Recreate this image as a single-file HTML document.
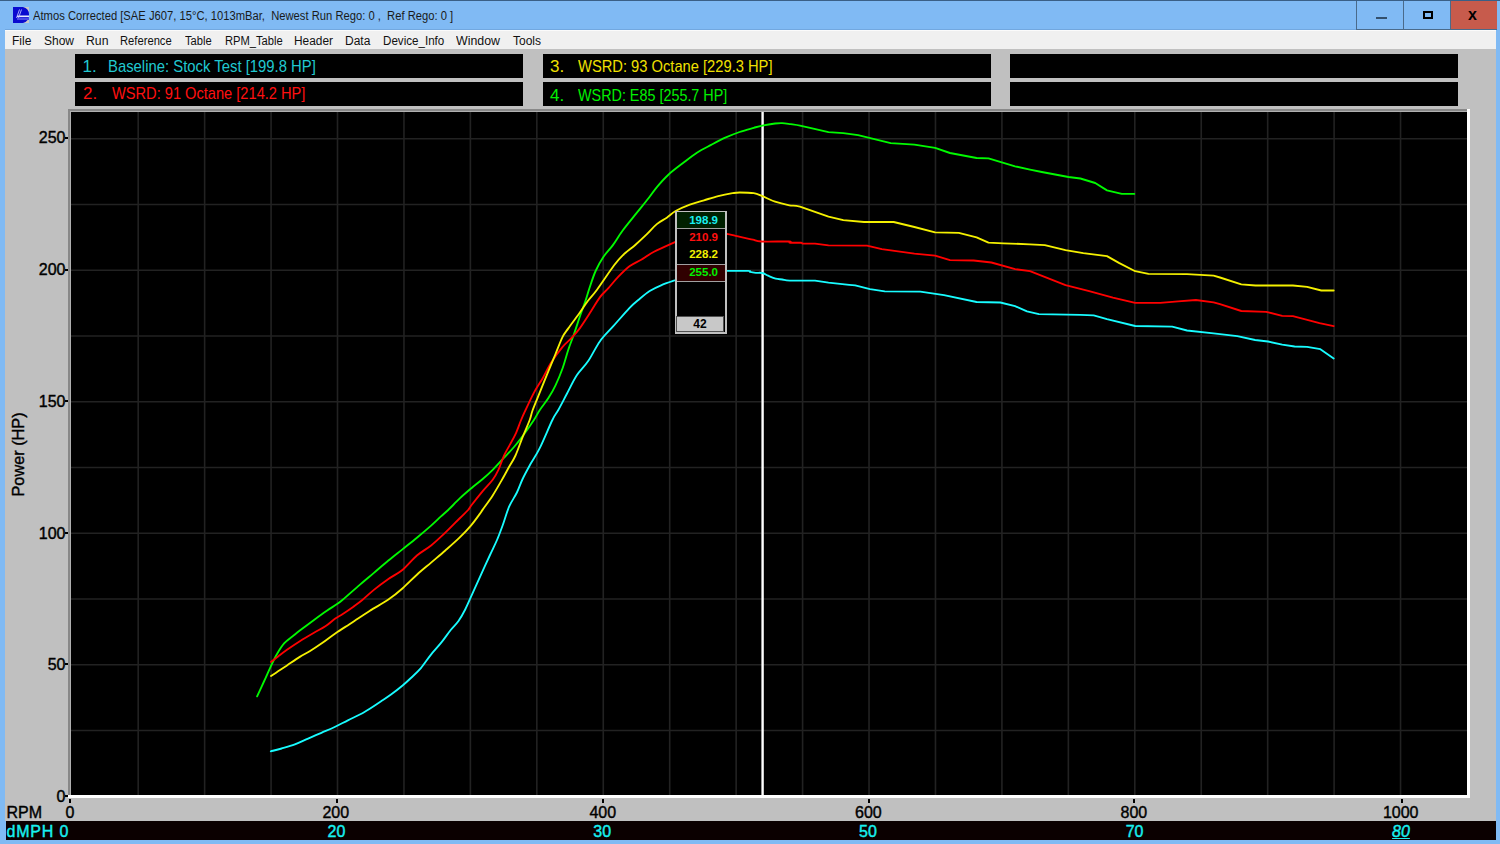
<!DOCTYPE html>
<html><head><meta charset="utf-8">
<style>
html,body{margin:0;padding:0;}
body{width:1500px;height:844px;position:relative;overflow:hidden;background:#80baf4;font-family:"Liberation Sans",sans-serif;}
.abs{position:absolute;}
#topline{left:0;top:0;width:1500px;height:1px;background:#3a5f86;}
#icon{left:13px;top:7px;width:16px;height:16px;}
#title{left:33px;top:7px;font-size:12.5px;color:#1a1a1a;white-space:nowrap;line-height:18px;transform:scaleX(0.897);transform-origin:0 0;}
.wbtn{top:1px;height:29px;}
#bmin{left:1356px;width:47px;border-left:1px solid #4a6a8a;border-bottom:1px solid #4a6a8a;box-sizing:border-box;}
#bmax{left:1403px;width:47px;border-left:1px solid #4a6a8a;border-bottom:1px solid #4a6a8a;box-sizing:border-box;}
#bclose{left:1450px;width:47px;background:#c75b4c;border-left:1px solid #4a6a8a;border-bottom:1px solid #4a6a8a;box-sizing:border-box;}
#menubar{left:5px;top:30px;width:1491px;height:19px;background:#f0f0f0;border-top:1px solid #fbfbfb;}
.mi{position:absolute;top:3px;font-size:12px;color:#111;line-height:14px;transform-origin:0 0;white-space:nowrap;}
#client{left:5px;top:49px;width:1491px;height:772px;background:#c0c0c0;}
.lbox{position:absolute;background:#000;height:24px;width:448px;}
.lt{position:absolute;top:1px;font-size:17px;line-height:20px;white-space:nowrap;transform-origin:0 0;}
#chartframe{left:68px;top:109px;width:1402px;height:689px;background:#fff;}
#chartframe .tl{position:absolute;left:0;top:0;width:1399px;height:686px;background:#888;}
#chartframe .tl2{position:absolute;left:2px;top:2px;width:1397px;height:684px;background:#b0b0b0;}
#plot{left:71px;top:112px;width:1396px;height:683px;background:#000;}
.xl{position:absolute;top:803.5px;width:200px;text-align:center;font-size:16px;line-height:18px;color:#000;-webkit-text-stroke:0.4px #000;}
.xt{position:absolute;top:799px;width:2px;height:4px;background:#000;}
.yl{position:absolute;left:0;width:65.5px;text-align:right;font-size:16px;line-height:18px;color:#000;-webkit-text-stroke:0.4px #000;}
.yt{position:absolute;left:65px;width:3px;height:2px;background:#000;}
#bottombar{left:6px;top:821px;width:1490px;height:19px;background:#0b0000;}
.ml{position:absolute;top:822.5px;width:200px;text-align:center;font-size:16px;line-height:18px;color:#18f0f0;-webkit-text-stroke:0.4px #18f0f0;}
.it{font-style:italic;text-decoration:underline;}
</style></head>
<body>
<div class="abs" id="topline"></div>
<svg class="abs" id="icon" viewBox="0 0 16 16"><rect width="16" height="16" fill="#c8c8c8"/><path d="M0 0H10A8 8 0 0 1 16 8V8A8 8 0 0 1 10 16H0Z" fill="#0a0ad0"/><path d="M4 10.5H16V13H4Z" fill="#4a4ae6"/><path d="M4 8.5H16V10H4Z" fill="#e8e8ff"/><path d="M3.5 11L6.5 2.5M5.5 11L8.5 2.5" stroke="#b8b8ff" stroke-width="0.9"/></svg>
<div class="abs" id="title">Atmos Corrected [SAE J607, 15°C, 1013mBar,&nbsp; Newest Run Rego: 0 ,&nbsp; Ref Rego: 0 ]</div>
<div class="abs wbtn" id="bmin"><div class="abs" style="left:19px;top:16px;width:11px;height:2px;background:#34506c"></div></div>
<div class="abs wbtn" id="bmax"><div class="abs" style="left:19px;top:10px;width:10px;height:8px;border:2px solid #000;box-sizing:border-box"></div></div>
<div class="abs wbtn" id="bclose"><div class="abs" style="left:17px;top:5px;font-size:16px;font-weight:bold;color:#000;line-height:18px">x</div></div>
<div class="abs" style="left:5px;top:29px;width:1351px;height:1px;background:#72a8e0"></div>
<div class="abs" id="menubar">
<span class="mi" style="left:7px;transform:scaleX(1)">File</span>
<span class="mi" style="left:39px;transform:scaleX(1)">Show</span>
<span class="mi" style="left:81px;transform:scaleX(1.02)">Run</span>
<span class="mi" style="left:115px;transform:scaleX(0.934)">Reference</span>
<span class="mi" style="left:180px;transform:scaleX(0.93)">Table</span>
<span class="mi" style="left:220px;transform:scaleX(0.93)">RPM_Table</span>
<span class="mi" style="left:289px;transform:scaleX(0.99)">Header</span>
<span class="mi" style="left:340px;transform:scaleX(1)">Data</span>
<span class="mi" style="left:378px;transform:scaleX(0.967)">Device_Info</span>
<span class="mi" style="left:451px;transform:scaleX(1.03)">Window</span>
<span class="mi" style="left:508px;transform:scaleX(1.0)">Tools</span>
</div>
<div class="abs" id="client"></div>
<div class="lbox" style="left:75px;top:54px"><span class="lt" style="left:7.5px;top:2.5px;color:#20c8d0">1.</span><span class="lt" style="left:33px;top:2.5px;color:#20c8d0;transform:scaleX(0.874)">Baseline: Stock Test [199.8 HP]</span></div>
<div class="lbox" style="left:75px;top:82px"><span class="lt" style="left:8px;top:1.5px;color:#ff1010">2.</span><span class="lt" style="left:37px;top:1.5px;color:#ff1010;transform:scaleX(0.860)">WSRD: 91 Octane [214.2 HP]</span></div>
<div class="lbox" style="left:543px;top:54px"><span class="lt" style="left:7px;top:2.5px;color:#f0e000">3.</span><span class="lt" style="left:35px;top:2.5px;color:#f0e000;transform:scaleX(0.865)">WSRD: 93 Octane [229.3 HP]</span></div>
<div class="lbox" style="left:543px;top:82px"><span class="lt" style="left:7px;top:3.5px;color:#00f000">4.</span><span class="lt" style="left:35px;top:3.5px;color:#00f000;transform:scaleX(0.845)">WSRD: E85 [255.7 HP]</span></div>
<div class="lbox" style="left:1009.5px;top:54px;width:448.5px"></div>
<div class="lbox" style="left:1009.5px;top:82px;width:448.5px"></div>
<div class="abs" id="chartframe"><div class="tl"></div><div class="tl2"></div><div class="tl3"></div></div>
<div class="abs" id="plot"></div>
<svg class="abs" style="left:0;top:0" width="1500" height="844">
<g stroke="#222" stroke-width="1.6">
<line x1="138.19" y1="112" x2="138.19" y2="795" />
<line x1="204.63" y1="112" x2="204.63" y2="795" />
<line x1="271.07" y1="112" x2="271.07" y2="795" />
<line x1="337.51" y1="112" x2="337.51" y2="795" />
<line x1="403.95" y1="112" x2="403.95" y2="795" />
<line x1="470.39" y1="112" x2="470.39" y2="795" />
<line x1="536.83" y1="112" x2="536.83" y2="795" />
<line x1="603.27" y1="112" x2="603.27" y2="795" />
<line x1="669.71" y1="112" x2="669.71" y2="795" />
<line x1="736.15" y1="112" x2="736.15" y2="795" />
<line x1="802.59" y1="112" x2="802.59" y2="795" />
<line x1="869.03" y1="112" x2="869.03" y2="795" />
<line x1="935.47" y1="112" x2="935.47" y2="795" />
<line x1="1001.91" y1="112" x2="1001.91" y2="795" />
<line x1="1068.35" y1="112" x2="1068.35" y2="795" />
<line x1="1134.79" y1="112" x2="1134.79" y2="795" />
<line x1="1201.23" y1="112" x2="1201.23" y2="795" />
<line x1="1267.67" y1="112" x2="1267.67" y2="795" />
<line x1="1334.11" y1="112" x2="1334.11" y2="795" />
<line x1="1400.55" y1="112" x2="1400.55" y2="795" />
<line x1="71" y1="730.45" x2="1467" y2="730.45" />
<line x1="71" y1="664.70" x2="1467" y2="664.70" />
<line x1="71" y1="598.95" x2="1467" y2="598.95" />
<line x1="71" y1="533.20" x2="1467" y2="533.20" />
<line x1="71" y1="467.45" x2="1467" y2="467.45" />
<line x1="71" y1="401.70" x2="1467" y2="401.70" />
<line x1="71" y1="335.95" x2="1467" y2="335.95" />
<line x1="71" y1="270.20" x2="1467" y2="270.20" />
<line x1="71" y1="204.45" x2="1467" y2="204.45" />
<line x1="71" y1="138.70" x2="1467" y2="138.70" />
</g>
<line x1="762.6" y1="112" x2="762.6" y2="795" stroke="#fff" stroke-width="2.4"/>
<g fill="none" stroke-width="1.85" stroke-linejoin="round" stroke-linecap="round">
<path stroke="#00fa00" d="M257.10,696.40 C258.28,693.83 261.95,685.93 264.20,681.00 C266.45,676.07 268.47,671.30 270.60,666.80 C272.73,662.30 274.75,657.90 277.00,654.00 C279.25,650.10 281.48,646.35 284.10,643.40 C286.72,640.45 290.08,638.43 292.70,636.30 C295.32,634.17 296.25,633.33 299.80,630.60 C303.35,627.87 309.50,623.22 314.00,619.90 C318.50,616.58 323.02,613.30 326.80,610.70 C330.58,608.10 334.10,606.08 336.70,604.30 C339.30,602.52 338.52,603.28 342.40,600.00 C346.28,596.72 354.70,589.17 360.00,584.60 C365.30,580.03 369.47,576.62 374.20,572.60 C378.93,568.58 383.65,564.42 388.40,560.50 C393.15,556.58 397.95,552.90 402.70,549.10 C407.45,545.30 412.17,541.62 416.90,537.70 C421.63,533.78 427.08,529.15 431.10,525.60 C435.12,522.05 438.15,519.00 441.00,516.40 C443.85,513.80 445.03,513.03 448.20,510.00 C451.37,506.97 456.13,501.83 460.00,498.20 C463.87,494.57 467.62,491.40 471.40,488.20 C475.18,485.00 479.15,482.07 482.70,479.00 C486.25,475.93 489.37,473.12 492.70,469.80 C496.03,466.48 499.15,462.90 502.70,459.10 C506.25,455.30 510.45,451.15 514.00,447.00 C517.55,442.85 520.68,438.70 524.00,434.20 C527.32,429.70 531.27,424.03 533.90,420.00 C536.53,415.97 537.38,413.65 539.80,410.00 C542.22,406.35 545.78,402.22 548.40,398.10 C551.02,393.98 553.13,390.28 555.50,385.30 C557.87,380.32 560.47,374.13 562.60,368.20 C564.73,362.27 566.40,355.38 568.30,349.70 C570.20,344.02 572.10,339.55 574.00,334.10 C575.90,328.65 577.82,322.45 579.70,317.00 C581.58,311.55 583.67,306.23 585.30,301.40 C586.93,296.57 587.78,293.07 589.50,288.00 C591.22,282.93 593.27,276.20 595.60,271.00 C597.93,265.80 600.65,261.07 603.50,256.80 C606.35,252.53 609.50,249.78 612.70,245.40 C615.90,241.02 618.67,235.95 622.70,230.50 C626.73,225.05 632.60,218.08 636.90,212.70 C641.20,207.32 645.13,202.52 648.50,198.20 C651.87,193.88 653.78,190.72 657.10,186.80 C660.42,182.88 664.13,178.62 668.40,174.70 C672.67,170.78 677.95,166.97 682.70,163.30 C687.45,159.63 692.17,155.77 696.90,152.70 C701.63,149.63 706.37,147.40 711.10,144.90 C715.83,142.40 720.55,139.85 725.30,137.70 C730.05,135.55 734.85,133.65 739.60,132.00 C744.35,130.35 750.02,128.87 753.80,127.80 C757.58,126.73 758.75,126.32 762.30,125.60 C765.85,124.88 771.78,123.92 775.10,123.50 C778.42,123.08 779.58,122.98 782.20,123.10 C784.82,123.22 787.83,123.78 790.80,124.20 C793.77,124.62 796.80,125.00 800.00,125.60 L810.00,127.80 L828.50,132.20 L843.30,133.10 L858.10,135.20 L890.70,143.20 L914.40,144.70 L935.10,147.90 L950.00,153.00 L976.60,158.00 L988.50,158.30 L1015.10,166.30 L1030.00,169.60 L1041.80,172.00 L1068.50,177.00 L1080.40,178.50 L1095.20,183.00 L1107.00,190.40 L1121.80,193.90 L1134.30,193.90"/>
<path stroke="#ff0000" d="M271.00,661.90 C272.23,660.95 275.73,658.22 278.40,656.20 C281.07,654.18 283.43,652.30 287.00,649.80 C290.57,647.30 295.30,644.05 299.80,641.20 C304.30,638.35 309.73,635.18 314.00,632.70 C318.27,630.22 321.85,628.67 325.40,626.30 C328.95,623.93 332.47,620.52 335.30,618.50 C338.13,616.48 339.32,616.22 342.40,614.20 C345.48,612.18 350.48,608.77 353.80,606.40 C357.12,604.03 358.90,602.80 362.30,600.00 C365.70,597.20 369.85,593.10 374.20,589.60 C378.55,586.10 383.65,582.32 388.40,579.00 C393.15,575.68 397.95,573.62 402.70,569.70 C407.45,565.78 412.17,559.53 416.90,555.50 C421.63,551.47 426.37,549.30 431.10,545.50 C435.83,541.70 440.57,537.20 445.30,532.70 C450.03,528.20 455.70,522.28 459.50,518.50 C463.30,514.72 466.12,512.20 468.10,510.00 C470.08,507.80 468.97,508.45 471.40,505.30 C473.83,502.15 479.15,495.37 482.70,491.10 C486.25,486.83 490.08,483.25 492.70,479.70 C495.32,476.15 496.50,473.83 498.40,469.80 C500.30,465.77 502.20,459.65 504.10,455.50 C506.00,451.35 507.90,448.45 509.80,444.90 C511.70,441.35 513.62,438.35 515.50,434.20 C517.38,430.05 519.42,424.03 521.10,420.00 C522.78,415.97 523.43,414.60 525.60,410.00 C527.77,405.40 531.25,397.70 534.10,392.40 C536.95,387.10 539.85,383.18 542.70,378.20 C545.55,373.22 547.88,367.72 551.20,362.50 C554.52,357.28 559.28,350.92 562.60,346.90 C565.92,342.88 568.25,341.48 571.10,338.40 C573.95,335.32 576.38,332.92 579.70,328.40 C583.02,323.88 587.62,316.52 591.00,311.30 C594.38,306.08 597.10,300.97 600.00,297.10 C602.90,293.23 605.33,291.50 608.40,288.10 C611.47,284.70 614.83,280.37 618.40,276.70 C621.97,273.03 626.00,268.93 629.80,266.10 C633.60,263.27 637.17,262.08 641.20,259.70 C645.23,257.32 648.20,254.82 654.00,251.80 C659.80,248.78 672.33,243.30 676.00,241.60 M727.10,234.00 C728.25,234.23 731.28,234.78 734.00,235.40 C736.72,236.02 740.25,237.00 743.40,237.70 C746.55,238.40 749.90,238.97 752.90,239.60 C755.90,240.23 755.40,241.18 761.40,241.50 C767.40,241.82 784.15,241.30 788.90,241.50 C793.65,241.70 787.83,242.50 789.90,242.70 L801.30,242.70 L802.70,243.60 L815.00,243.60 L828.50,245.40 L867.00,245.70 L881.80,249.20 L914.40,253.70 L935.10,255.70 L950.00,260.20 L973.60,260.50 L991.40,262.50 L1015.10,269.10 L1030.00,271.20 L1065.50,285.10 L1089.20,291.10 L1112.90,297.60 L1135.20,302.90 L1160.30,302.90 L1178.10,301.40 L1195.90,300.00 L1213.60,302.30 L1220.00,304.20 L1241.30,311.00 L1266.20,311.80 L1282.20,315.80 L1292.90,316.10 L1305.30,319.30 L1319.50,323.20 L1333.70,326.10"/>
<path stroke="#f4f000" d="M271.00,676.10 C272.23,675.27 275.73,672.88 278.40,671.10 C281.07,669.32 283.43,667.77 287.00,665.40 C290.57,663.03 296.02,659.27 299.80,656.90 C303.58,654.53 305.92,653.57 309.70,651.20 C313.48,648.83 318.23,645.67 322.50,642.70 C326.77,639.73 330.80,636.48 335.30,633.40 C339.80,630.32 345.70,626.68 349.50,624.20 C353.30,621.72 354.68,620.75 358.10,618.50 C361.52,616.25 367.32,612.43 370.00,610.70 C372.68,608.97 371.13,609.95 374.20,608.10 C377.27,606.25 383.65,602.92 388.40,599.60 C393.15,596.28 397.95,592.35 402.70,588.20 C407.45,584.05 412.17,578.97 416.90,574.70 C421.63,570.43 426.37,566.63 431.10,562.60 C435.83,558.57 440.57,554.65 445.30,550.50 C450.03,546.35 455.23,541.85 459.50,537.70 C463.77,533.55 467.48,529.62 470.90,525.60 C474.32,521.58 478.03,516.27 480.00,513.60 C481.97,510.93 480.58,512.63 482.70,509.60 C484.82,506.57 489.62,500.15 492.70,495.40 C495.78,490.65 498.60,485.62 501.20,481.10 C503.80,476.58 505.92,472.57 508.30,468.30 C510.68,464.03 513.12,460.70 515.50,455.50 C517.88,450.30 520.23,443.02 522.60,437.10 C524.97,431.18 528.02,424.52 529.70,420.00 C531.38,415.48 531.02,414.60 532.70,410.00 C534.38,405.40 537.18,398.88 539.80,392.40 C542.42,385.92 545.78,377.50 548.40,371.10 C551.02,364.70 553.13,359.70 555.50,354.00 C557.87,348.30 560.47,341.17 562.60,336.90 C564.73,332.63 565.45,332.42 568.30,328.40 C571.15,324.38 576.42,317.42 579.70,312.80 C582.98,308.18 585.12,304.55 588.00,300.70 C590.88,296.85 592.65,295.60 597.00,289.70 C601.35,283.80 609.82,271.02 614.10,265.30 C618.38,259.58 619.13,258.83 622.70,255.40 C626.27,251.97 631.47,248.25 635.50,244.70 C639.53,241.15 643.35,237.53 646.90,234.10 C650.45,230.67 653.48,226.83 656.80,224.10 C660.12,221.37 663.67,219.88 666.80,217.70 C669.93,215.52 671.77,213.18 675.60,211.00 C679.43,208.82 685.07,206.38 689.80,204.60 C694.53,202.82 699.27,201.72 704.00,200.30 C708.73,198.88 713.45,197.28 718.20,196.10 C722.95,194.92 728.93,193.80 732.50,193.20 C736.07,192.60 736.05,192.50 739.60,192.50 C743.15,192.50 750.02,192.60 753.80,193.20 C757.58,193.80 758.75,194.68 762.30,196.10 C765.85,197.52 770.58,200.17 775.10,201.70 C779.62,203.23 785.25,204.47 789.40,205.30 C793.55,206.13 793.48,204.82 800.00,206.70 L828.50,216.60 L843.30,220.20 L864.00,222.00 L893.70,222.00 L914.40,227.00 L935.10,232.30 L958.80,232.90 L976.60,237.40 L988.50,242.70 L1003.30,243.30 L1030.00,244.30 L1044.80,245.20 L1065.50,250.20 L1083.30,253.20 L1107.00,256.10 L1118.90,262.90 L1135.20,271.20 L1148.50,273.90 L1187.00,274.20 L1213.60,275.70 L1220.00,277.50 L1241.30,284.30 L1255.50,285.50 L1292.90,285.50 L1307.10,286.80 L1321.30,290.50 L1333.70,290.50"/>
<path stroke="#18fcff" d="M270.80,751.30 C272.60,750.83 277.58,749.65 281.60,748.50 C285.62,747.35 290.48,746.05 294.90,744.40 C299.32,742.75 303.68,740.53 308.10,738.60 C312.52,736.67 316.97,734.73 321.40,732.80 C325.83,730.87 330.28,729.08 334.70,727.00 C339.12,724.92 342.93,722.80 347.90,720.30 C352.87,717.80 358.97,715.17 364.50,712.00 C370.03,708.83 376.68,704.20 381.10,701.30 C385.52,698.40 387.42,697.23 391.00,694.60 C394.58,691.97 399.28,688.27 402.60,685.50 C405.92,682.73 407.85,680.90 410.90,678.00 C413.95,675.10 417.58,671.97 420.90,668.10 C424.22,664.23 427.48,658.95 430.80,654.80 C434.12,650.65 437.48,647.33 440.80,643.20 C444.12,639.07 447.75,633.70 450.70,630.00 C453.65,626.30 456.08,624.42 458.50,621.00 C460.92,617.58 462.90,614.02 465.20,609.50 C467.50,604.98 469.83,599.35 472.30,593.90 C474.77,588.45 477.05,583.28 480.00,576.80 C482.95,570.32 487.17,561.13 490.00,555.00 C492.83,548.87 494.88,544.97 497.00,540.00 C499.12,535.03 500.68,530.75 502.70,525.20 C504.72,519.65 506.73,512.15 509.10,506.70 C511.47,501.25 514.65,497.12 516.90,492.50 C519.15,487.88 520.47,483.50 522.60,479.00 C524.73,474.50 526.87,470.60 529.70,465.50 C532.53,460.40 535.82,455.98 539.60,448.40 C543.38,440.82 549.28,426.40 552.40,420.00 C555.52,413.60 555.88,414.37 558.30,410.00 C560.72,405.63 563.82,399.58 566.90,393.80 C569.98,388.02 573.25,380.75 576.80,375.30 C580.35,369.85 584.33,366.78 588.20,361.10 C592.07,355.42 595.82,347.02 600.00,341.20 C604.18,335.38 608.37,331.77 613.30,326.20 C618.23,320.63 625.43,312.17 629.60,307.80 C633.77,303.43 634.95,302.80 638.30,300.00 C641.65,297.20 645.90,293.45 649.70,291.00 C653.50,288.55 656.72,287.13 661.10,285.30 C665.48,283.47 673.52,280.88 676.00,280.00 M727.10,270.90 C730.62,270.90 744.37,270.73 748.20,270.90 C752.03,271.07 748.83,271.58 750.10,271.90 C751.37,272.22 753.75,272.62 755.80,272.80 C757.85,272.98 760.35,272.52 762.40,273.00 C764.45,273.48 765.88,274.75 768.10,275.70 C770.32,276.65 773.33,278.07 775.70,278.70 C778.07,279.33 779.93,279.18 782.30,279.50 C784.67,279.82 784.45,280.42 789.90,280.60 L815.00,280.60 L828.50,282.70 L849.20,284.80 L855.20,285.40 L870.00,289.20 L884.80,291.30 L920.30,291.60 L944.00,295.10 L976.60,302.00 L1000.30,302.50 L1015.10,306.10 L1027.00,311.40 L1038.90,314.20 L1080.40,314.80 L1093.70,315.40 L1107.00,319.20 L1135.20,326.00 L1172.20,326.60 L1187.00,330.50 L1213.60,333.40 L1237.30,336.10 L1255.10,340.00 L1268.00,341.50 L1282.20,344.70 L1294.60,346.50 L1307.10,346.90 L1320.40,349.20 L1333.70,358.40"/>
</g>
</svg>
<div class="yl" style="top:788.2px">0</div>
<div class="yt" style="top:794.7px"></div>
<div class="yl" style="top:656.2px">50</div>
<div class="yt" style="top:663.2px"></div>
<div class="yl" style="top:524.9px">100</div>
<div class="yt" style="top:531.7px"></div>
<div class="yl" style="top:392.8px">150</div>
<div class="yt" style="top:400.2px"></div>
<div class="yl" style="top:261.2px">200</div>
<div class="yt" style="top:268.7px"></div>
<div class="yl" style="top:128.8px">250</div>
<div class="yt" style="top:137.2px"></div>
<div class="xl" style="left:-30.0px">0</div>
<div class="xt" style="left:69.0px"></div>
<div class="xl" style="left:235.8px">200</div>
<div class="xt" style="left:336.0px"></div>
<div class="xl" style="left:502.8px">400</div>
<div class="xt" style="left:602.1px"></div>
<div class="xl" style="left:768.4px">600</div>
<div class="xt" style="left:868.3px"></div>
<div class="xl" style="left:1033.9px">800</div>
<div class="xt" style="left:1133.3px"></div>
<div class="xl" style="left:1300.7px">1000</div>
<div class="xt" style="left:1400.8px"></div>
<div class="abs" style="left:6.5px;top:803.5px;font-size:16px;line-height:18px;-webkit-text-stroke:0.4px #000;">RPM</div>
<div class="abs" style="left:-25px;top:445px;width:85px;font-size:16.3px;-webkit-text-stroke:0.4px #000;line-height:18px;transform:rotate(-90deg);white-space:nowrap;">Power (HP)</div>
<div class="abs" id="bottombar"></div>
<div class="abs" style="left:6.5px;top:822.5px;font-size:16px;line-height:18px;color:#18f0f0;letter-spacing:0.8px;-webkit-text-stroke:0.4px #18f0f0;">dMPH</div>
<div class="abs" style="left:59.5px;top:822.5px;font-size:16px;line-height:18px;color:#18f0f0;-webkit-text-stroke:0.4px #18f0f0;">0</div>
<div class="ml" style="left:236.4px">20</div>
<div class="ml" style="left:502.2px">30</div>
<div class="ml" style="left:768.0px">50</div>
<div class="ml" style="left:1034.6px">70</div>
<div class="ml it" style="left:1301.0px">80</div>
<!-- tooltip -->
<div class="abs" style="left:675px;top:211px;width:52px;height:123px;background:#c0c0c0;">
 <div class="abs" style="left:2px;top:2px;width:48px;height:119px;background:#000;"></div>
 <div class="abs" style="left:2px;top:1px;width:48px;height:17px;background:#002000;border-bottom:1px solid #a0a0a0;box-sizing:border-box"></div>
 <div class="abs" style="left:2px;top:53px;width:48px;height:18px;background:#300000;border-top:1px solid #a0a0a0;border-bottom:1px solid #a0a0a0;box-sizing:border-box"></div>
 <div class="abs tt" style="top:0.8px;color:#18f0f0">198.9</div>
 <div class="abs tt" style="top:18px;color:#ff1010">210.9</div>
 <div class="abs tt" style="top:35.2px;color:#f0f000">228.2</div>
 <div class="abs tt" style="top:53px;color:#00f000">255.0</div>
 <div class="abs" style="left:1px;top:105px;width:48px;height:16px;background:#c8c8c8;border:1px solid #505050;box-sizing:border-box;text-align:center;font-weight:bold;font-size:12px;line-height:14px;color:#000">42</div>
</div>
<style>.tt{left:2px;width:41px;text-align:right;font-weight:bold;font-size:11.5px;line-height:16px;}</style>
</body></html>
